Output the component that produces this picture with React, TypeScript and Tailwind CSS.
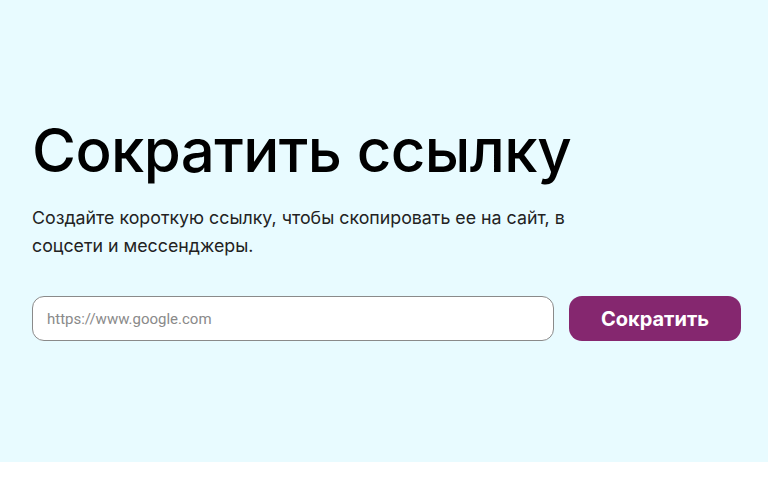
export default function App() {
  return (
    <div className="w-full bg-white" style={{ fontFamily: "Inter, 'Noto Sans', sans-serif" }}>
      <section className="h-[462px] bg-[#e8fbff] pl-8 pr-[27px] pt-[114px]">
        <h1 className="text-[60px] font-medium leading-[1.2] tracking-[-0.01em] text-black">
          Сократить ссылку
        </h1>
        <p className="mt-[18px] max-w-[560px] text-[17.8px] leading-7 text-[#222]">
          Создайте короткую ссылку, чтобы скопировать ее на сайт, в соцсети и мессенджеры.
        </p>
        <div className="mt-[36px] flex items-center gap-[15px]">
          <input
            type="text"
            placeholder="https://www.google.com"
            className="h-[45px] flex-1 rounded-xl border border-[#8a8a8a] bg-white px-[14px] font-['Roboto',sans-serif] text-[15px] text-black outline-none placeholder:text-[#8a8a8a]"
          />
          <button className="h-[45px] w-[172px] rounded-[13px] bg-[#85276f] text-[20px] font-bold text-white">
            Сократить
          </button>
        </div>
      </section>
    </div>
  );
}
